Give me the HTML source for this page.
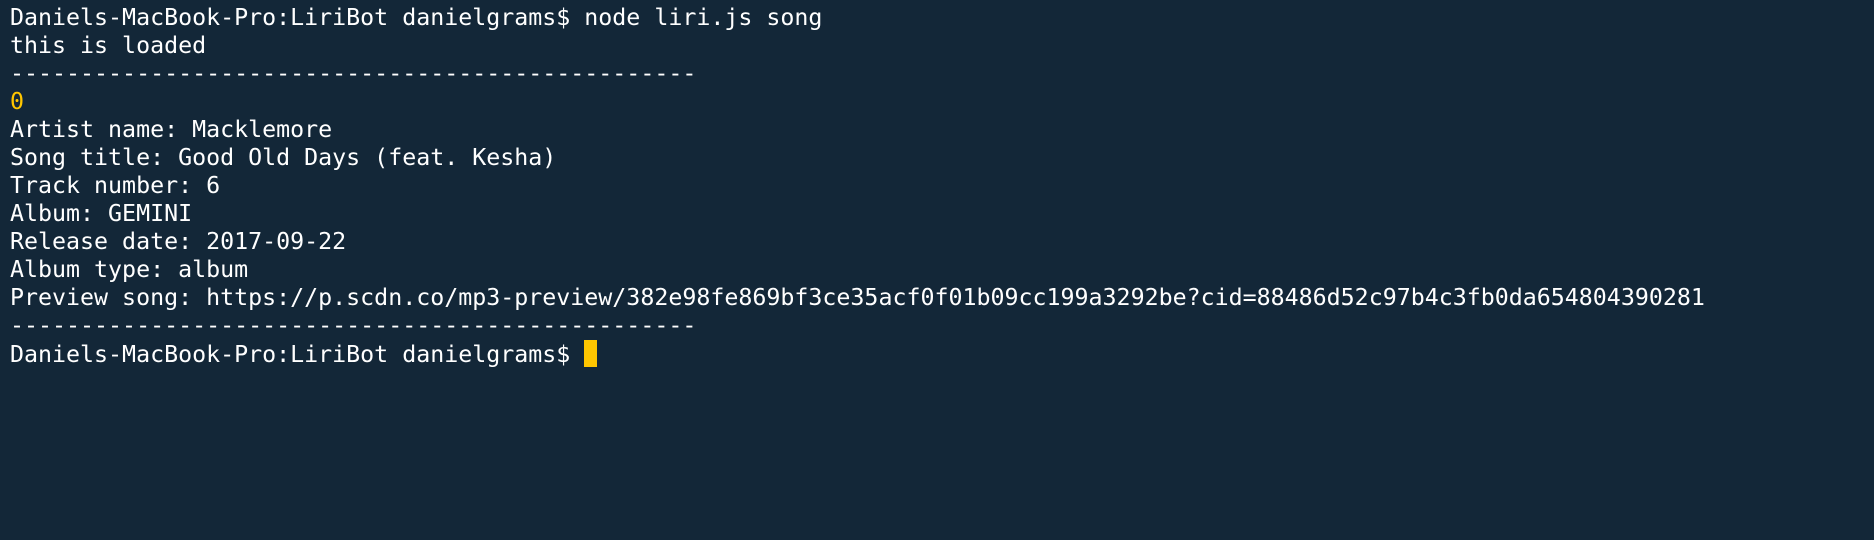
<html><head><style>
body{margin:0;background:#132738;width:1874px;height:540px;overflow:hidden}
pre{margin:0;padding:4px 0 0 10px;font-family:"DejaVu Sans Mono","Liberation Mono",monospace;font-size:23.28px;line-height:28px;color:#fff}
.y{color:#ffc600}
.c{display:inline-block;width:13px;height:27px;background:#ffc600;vertical-align:-5px}
</style></head><body><pre>Daniels-MacBook-Pro:LiriBot danielgrams$ node liri.js song
this is loaded
-------------------------------------------------
<span class="y">0</span>
Artist name: Macklemore
Song title: Good Old Days (feat. Kesha)
Track number: 6
Album: GEMINI
Release date: 2017-09-22
Album type: album
Preview song: https://p.scdn.co/mp3-preview/382e98fe869bf3ce35acf0f01b09cc199a3292be?cid=88486d52c97b4c3fb0da654804390281
-------------------------------------------------
Daniels-MacBook-Pro:LiriBot danielgrams$ <span class="c"></span></pre></body></html>
